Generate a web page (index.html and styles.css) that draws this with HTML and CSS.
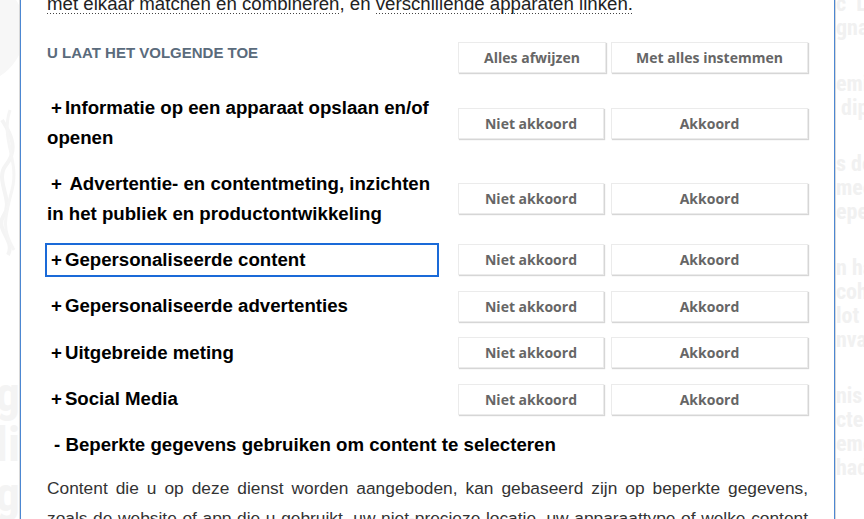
FILE: index.html
```html
<!DOCTYPE html>
<html lang="nl">
<head>
<meta charset="utf-8">
<title>Privacy-instellingen</title>
<link rel="stylesheet" href="styles.css">
</head>
<body>
<div class="page">
  <aside class="bg bg-left" aria-hidden="true">
    <svg class="ornament" width="20" height="300" viewBox="0 0 20 300">
      <circle cx="-30" cy="30" r="55" fill="#f7f7f7"/>
      <path d="M2 120 C 12 135, 18 150, 6 165 S 14 200, 4 215 S 16 240, 8 255" fill="none" stroke="#f4f4f4" stroke-width="4"/>
      <path d="M10 110 C 0 140, 20 160, 12 190 S 2 230, 14 250" fill="none" stroke="#f5f5f5" stroke-width="3"/>
    </svg>
    <div class="bg-big">ig<br>li<br>g</div>
  </aside>

  <main class="dialog">
    <p class="intro"><span class="term">met elkaar matchen en combineren</span>, en <span class="term">verschillende apparaten linken.</span></p>

    <div class="head">
      <h3 class="label">U LAAT HET VOLGENDE TOE</h3>
      <div class="actions head-actions">
        <button class="btn btn-head-s">Alles afwijzen</button>
        <button class="btn btn-l">Met alles instemmen</button>
      </div>
    </div>

    <ul class="purposes">
      <li class="purpose">
        <div class="title"><span class="sign">+</span>Informatie op een apparaat opslaan en/of openen</div>
        <div class="actions"><button class="btn btn-s">Niet akkoord</button><button class="btn btn-l">Akkoord</button></div>
      </li>
      <li class="purpose">
        <div class="title"><span class="sign">+</span> Advertentie- en contentmeting, inzichten in het publiek en productontwikkeling</div>
        <div class="actions"><button class="btn btn-s">Niet akkoord</button><button class="btn btn-l">Akkoord</button></div>
      </li>
      <li class="purpose">
        <div class="title focused"><span class="sign">+</span>Gepersonaliseerde content</div>
        <div class="actions"><button class="btn btn-s">Niet akkoord</button><button class="btn btn-l">Akkoord</button></div>
      </li>
      <li class="purpose">
        <div class="title"><span class="sign">+</span>Gepersonaliseerde advertenties</div>
        <div class="actions"><button class="btn btn-s">Niet akkoord</button><button class="btn btn-l">Akkoord</button></div>
      </li>
      <li class="purpose">
        <div class="title"><span class="sign">+</span>Uitgebreide meting</div>
        <div class="actions"><button class="btn btn-s">Niet akkoord</button><button class="btn btn-l">Akkoord</button></div>
      </li>
      <li class="purpose">
        <div class="title"><span class="sign">+</span>Social Media</div>
        <div class="actions"><button class="btn btn-s">Niet akkoord</button><button class="btn btn-l">Akkoord</button></div>
      </li>
    </ul>

    <h4 class="title open"><span class="sign minus">-</span> Beperkte gegevens gebruiken om content te selecteren</h4>
    <p class="desc">Content die u op deze dienst worden aangeboden, kan gebaseerd zijn op beperkte gegevens, zoals de website of app die u gebruikt, uw niet-precieze locatie, uw apparaattype of welke content u eerder hebt bekeken of waarmee u interactie hebt gehad (bijvoorbeeld om de frequentie te beperken waarmee video's of artikelen aan u worden getoond).</p>
  </main>

  <aside class="bg bg-right" aria-hidden="true">
    <p>c&nbsp;&nbsp;L<br>gna</p>
    <p>emi<br>&nbsp;dip</p>
    <p>s do<br>mee<br>epe</p>
    <p>n ha<br>coh<br>lot<br>nvaa</p>
    <p>nis<br>cte<br>eme<br>had</p>
  </aside>
</div>
</body>
</html>
```

FILE: styles.css
```css
* { box-sizing: border-box; }

html, body {
  margin: 0;
  padding: 0;
  background: #ffffff;
}

body {
  font-family: "Liberation Sans", Arial, sans-serif;
  color: #222;
}

.page {
  display: flex;
  height: 519px;
  overflow: hidden;
}

/* faint page behind the dialog */
.bg {
  overflow: hidden;
  color: #f1f1f1;
  font-family: "Liberation Sans Narrow", "Roboto", sans-serif;
  font-stretch: condensed;
  font-weight: 700;
}

.bg-left {
  width: 20px;
  flex: 0 0 20px;
  display: flex;
  flex-direction: column;
}

.ornament {
  display: block;
  flex: 0 0 auto;
}

.bg-big {
  margin-top: 70px;
  font-size: 48px;
  line-height: 50px;
  text-align: right;
  white-space: nowrap;
  direction: rtl;
  color: #f4f4f4;
}

.bg-right {
  flex: 1 1 auto;
  padding-left: 1px;
  margin-top: -8px;
  font-size: 22px;
  line-height: 24px;
  white-space: nowrap;
}

.bg-right p {
  margin: 0 0 32px;
}

/* dialog */
.dialog {
  flex: 0 0 815px;
  width: 815px;
  border-left: 1px solid #4c87d2;
  border-right: 1px solid #4c87d2;
  box-shadow: 0 0 0 1px #d8d8d8;
  padding: 0 26px 0 26px;
  background: #fff;
}

.intro {
  margin: -11px 0 23px;
  font-size: 18.67px;
  line-height: 30px;
  color: #222;
}

.term {
  background-image: linear-gradient(to right, #444 34%, rgba(0,0,0,0) 34%);
  background-size: 3px 1px;
  background-repeat: repeat-x;
  background-position: left bottom;
}

.head {
  display: flex;
  justify-content: space-between;
  align-items: flex-start;
}

.label {
  margin: 0;
  padding-top: 2px;
  font-size: 15px;
  font-weight: 700;
  line-height: 17px;
  color: #5a6b7c;
}

.actions {
  display: flex;
  gap: 7px;
}

.head-actions {
  gap: 5px;
}

.btn {
  height: 31px;
  padding: 0;
  margin: 0;
  background: #fff;
  border: 1px solid #ebebeb;
  box-shadow: 1px 1px 1px #d6d6d6;
  font-family: "Open Sans", "Liberation Sans", sans-serif;
  font-weight: 700;
  font-size: 14px;
  color: #666;
  text-align: center;
}

.btn-s { width: 146px; }
.btn-head-s { width: 148px; }
.btn-l { width: 197px; }

.purposes {
  list-style: none;
  margin: 20px 0 0;
  padding: 0;
  display: flex;
  flex-direction: column;
  gap: 15.5px;
}

.purpose {
  display: flex;
  justify-content: space-between;
  align-items: center;
}

.title {
  flex: 0 0 390px;
  width: 390px;
  margin: 0;
  font-size: 18.67px;
  font-weight: 700;
  line-height: 30px;
  color: #000;
}

.focused {
  outline: 2px solid #1a6ad8;
}

.sign {
  padding-left: 4px;
  margin-right: 3px;
}

.sign.minus {
  padding-left: 7px;
  margin-right: 0;
}

.title.open {
  width: auto;
  margin-top: 15px;
}

.desc {
  margin: 13px 0 0;
  font-size: 17.33px;
  line-height: 30px;
  color: #333;
  text-align: justify;
}
```
